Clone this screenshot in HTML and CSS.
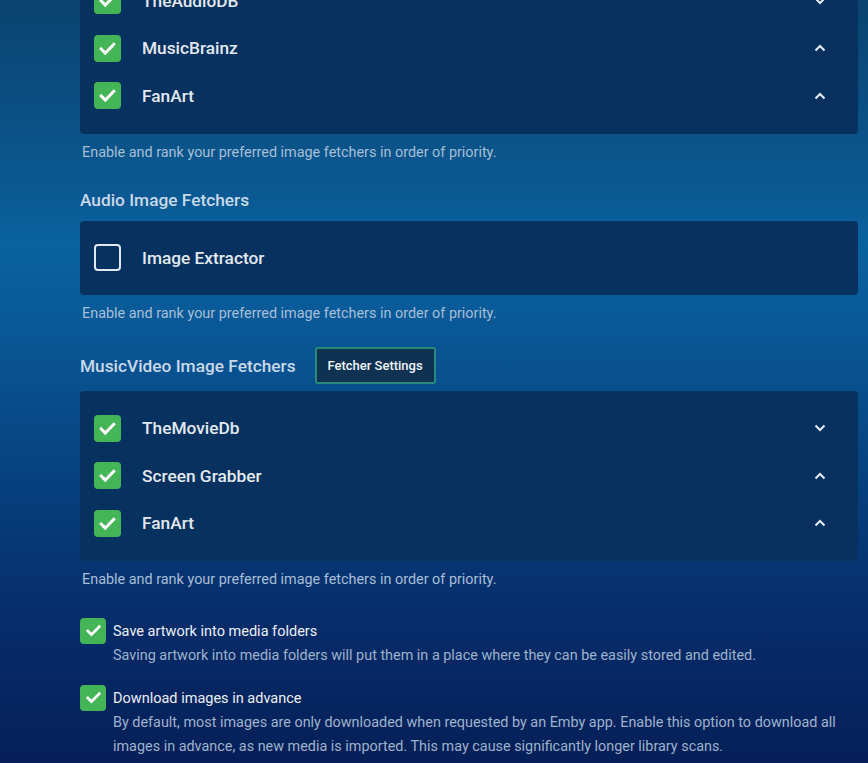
FILE: index.html
```html
<!DOCTYPE html>
<html>
<head>
<meta charset="utf-8">
<link rel="stylesheet" href="styles.css">
</head>
<body>
<div class="page">
  <section class="group first">
    <div class="card">
      <div class="row"><span class="cb on"><svg viewBox="0 0 24 24"><path d="M5.5 12.5l4.2 4.2 8.8-9"/></svg></span><span class="name">TheAudioDB</span><span class="chev"><svg viewBox="0 0 12 8"><path d="M1.5 1.5l4.5 4.5 4.5-4.5"/></svg></span></div>
      <div class="row"><span class="cb on"><svg viewBox="0 0 24 24"><path d="M5.5 12.5l4.2 4.2 8.8-9"/></svg></span><span class="name">MusicBrainz</span><span class="chev"><svg viewBox="0 0 12 8"><path d="M1.5 6.5l4.5-4.5 4.5 4.5"/></svg></span></div>
      <div class="row"><span class="cb on"><svg viewBox="0 0 24 24"><path d="M5.5 12.5l4.2 4.2 8.8-9"/></svg></span><span class="name">FanArt</span><span class="chev"><svg viewBox="0 0 12 8"><path d="M1.5 6.5l4.5-4.5 4.5 4.5"/></svg></span></div>
    </div>
    <p class="help">Enable and rank your preferred image fetchers in order of priority.</p>
  </section>

  <section class="group">
    <div class="head"><h3>Audio Image Fetchers</h3></div>
    <div class="card single">
      <div class="row"><span class="cb"></span><span class="name">Image Extractor</span></div>
    </div>
    <p class="help">Enable and rank your preferred image fetchers in order of priority.</p>
  </section>

  <section class="group">
    <div class="head tall"><h3>MusicVideo Image Fetchers</h3><button class="btn">Fetcher Settings</button></div>
    <div class="card">
      <div class="row"><span class="cb on"><svg viewBox="0 0 24 24"><path d="M5.5 12.5l4.2 4.2 8.8-9"/></svg></span><span class="name">TheMovieDb</span><span class="chev"><svg viewBox="0 0 12 8"><path d="M1.5 1.5l4.5 4.5 4.5-4.5"/></svg></span></div>
      <div class="row"><span class="cb on"><svg viewBox="0 0 24 24"><path d="M5.5 12.5l4.2 4.2 8.8-9"/></svg></span><span class="name">Screen Grabber</span><span class="chev"><svg viewBox="0 0 12 8"><path d="M1.5 6.5l4.5-4.5 4.5 4.5"/></svg></span></div>
      <div class="row"><span class="cb on"><svg viewBox="0 0 24 24"><path d="M5.5 12.5l4.2 4.2 8.8-9"/></svg></span><span class="name">FanArt</span><span class="chev"><svg viewBox="0 0 12 8"><path d="M1.5 6.5l4.5-4.5 4.5 4.5"/></svg></span></div>
    </div>
    <p class="help">Enable and rank your preferred image fetchers in order of priority.</p>
  </section>

  <div class="options">
    <div class="option">
      <span class="cb small on"><svg viewBox="0 0 24 24"><path d="M5.5 12.5l4.2 4.2 8.8-9"/></svg></span>
      <div class="opt-text">
        <div class="opt-label">Save artwork into media folders</div>
        <div class="opt-desc">Saving artwork into media folders will put them in a place where they can be easily stored and edited.</div>
      </div>
    </div>
    <div class="option">
      <span class="cb small on"><svg viewBox="0 0 24 24"><path d="M5.5 12.5l4.2 4.2 8.8-9"/></svg></span>
      <div class="opt-text">
        <div class="opt-label">Download images in advance</div>
        <div class="opt-desc">By default, most images are only downloaded when requested by an Emby app. Enable this option to download all images in advance, as new media is imported. This may cause significantly longer library scans.</div>
      </div>
    </div>
  </div>
</div>
</body>
</html>
```

FILE: styles.css
```css
html, body {
  margin: 0;
  padding: 0;
  height: 100%;
}
body {
  font-family: Roboto, "Liberation Sans", sans-serif;
  background: linear-gradient(180deg, #0b436f 0px, #0a5a94 200px, #0a629e 240px, #095897 330px, #07407f 480px, #062d6a 620px, #061f58 763px);
  color: #e6edf4;
  overflow: hidden;
}
.page {
  padding: 0 10px 0 80px;
  margin-top: -37px;
}
.card {
  background: #07325f;
  border-radius: 4px;
  padding: 14px 0;
}
.card.single {
  padding: 13px 0;
}
.row {
  height: 47.5px;
  display: flex;
  align-items: center;
  padding-left: 14px;
  padding-right: 32px;
}
.card.single .row {
  height: 48px;
}
.cb {
  width: 27px;
  height: 27px;
  box-sizing: border-box;
  border-radius: 4px;
  border: 2px solid #e2e8ef;
  display: flex;
  align-items: center;
  justify-content: center;
  flex: none;
}
.cb.on {
  background: #44b556;
  border: none;
}
.cb svg {
  width: 23px;
  height: 23px;
  fill: none;
  stroke: #ffffff;
  stroke-width: 3.2;
  stroke-linecap: square;
}
.name {
  margin-left: 21px;
  font-size: 17.3px;
  font-weight: 500;
  color: #e3e9f0;
  flex: 1;
}
.chev {
  width: 12px;
  height: 8px;
  display: flex;
}
.chev svg {
  width: 12px;
  height: 8px;
  fill: none;
  stroke: #e6ecf2;
  stroke-width: 2;
}
.help {
  margin: 0;
  padding: 10px 0 0 2px;
  line-height: 18px;
  font-size: 14.4px;
  color: #a7bfd6;
}
.head {
  display: flex;
  align-items: center;
  height: 42px;
  margin-top: 17px;
}
.head.tall {
  height: 50px;
  margin-top: 18px;
}
h3 {
  margin: 0;
  font-size: 17.3px;
  font-weight: 500;
  color: #c9d9e8;
}
.btn {
  margin-left: 19px;
  height: 37px;
  width: 121px;
  background: #0f3253;
  border: 2px solid #2a8a78;
  border-radius: 3px;
  color: #f0f4f8;
  font-family: Roboto, "Liberation Sans", sans-serif;
  font-size: 13px;
  font-weight: 500;
  padding: 0;
}
.options {
  padding-top: 28.5px;
}
.option {
  display: flex;
  gap: 7px;
  margin-bottom: 17px;
}
.cb.small {
  width: 26px;
  height: 26px;
}
.cb.small svg {
  width: 21px;
  height: 21px;
}
.opt-text {
  padding-top: 5px;
}
.opt-label {
  font-size: 14.5px;
  color: #eaf0f6;
  line-height: 18px;
}
.opt-desc {
  font-size: 14.4px;
  color: #9db3cb;
  line-height: 24px;
  margin-top: 3px;
}
```
